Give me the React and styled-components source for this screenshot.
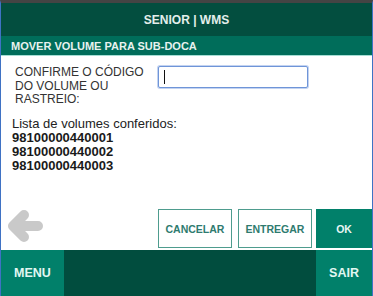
import styled, { createGlobalStyle } from "styled-components";

const Global = createGlobalStyle`
  html, body {
    margin: 0;
    padding: 0;
    background: #ffffff;
  }
  * {
    box-sizing: border-box;
  }
`;

const Frame = styled.div`
  width: 373px;
  height: 296px;
  display: flex;
  flex-direction: column;
  border-top: 3px solid #444444;
  border-left: 1px solid #3f72c4;
  border-right: 1px solid #3f72c4;
  font-family: "Liberation Sans", Arial, sans-serif;
  overflow: hidden;
`;

const Header = styled.div`
  height: 33px;
  display: flex;
  align-items: center;
  justify-content: center;
  background: #034e3f;
  color: #e4eeeb;
  font-size: 12px;
  font-weight: bold;
`;

const SubHeader = styled.div`
  height: 20px;
  display: flex;
  align-items: center;
  padding-left: 10px;
  background: #006d5a;
  color: #e8f2ef;
  font-size: 11px;
  font-weight: bold;
  border-bottom: 1px solid #a6ded5;
`;

const Content = styled.div`
  flex: 1;
  display: flex;
  flex-direction: column;
  background: #ffffff;
  padding: 10px 0 2px 0;
`;

const Row = styled.div`
  display: flex;
  align-items: flex-start;
  gap: 7px;
  padding-left: 14px;
`;

const Label = styled.label`
  width: 136px;
  font-size: 12px;
  line-height: 13.5px;
  color: #333333;
`;

const InputWrap = styled.div`
  position: relative;
  width: 150px;
  height: 22px;
  &::after {
    content: "";
    position: absolute;
    left: 6px;
    top: 4px;
    width: 1px;
    height: 14px;
    background: #111111;
  }
`;

const Input = styled.input`
  width: 100%;
  height: 100%;
  border: 1px solid #6f95d8;
  box-shadow: 0 0 0 1px #c3d3f1;
  border-radius: 2px;
  outline: none;
  padding: 0 6px;
  font-family: inherit;
  font-size: 12px;
  caret-color: transparent;
`;

const List = styled.div`
  margin-top: 10px;
  padding-left: 11px;
  font-size: 13px;
  line-height: 13.7px;
  color: #222222;
`;

const ListTitle = styled.div`
  margin-bottom: 1px;
`;

const Code = styled.div`
  font-weight: bold;
  color: #1a1a1a;
`;

const Actions = styled.div`
  margin-top: auto;
  display: flex;
  align-items: center;
`;

const Back = styled.svg`
  width: 36px;
  height: 36px;
  margin-left: 6px;
  margin-top: -6px;
  flex: none;
`;

const Buttons = styled.div`
  margin-left: auto;
  display: flex;
`;

const Button = styled.button`
  height: 39px;
  width: ${(p) => p.w}px;
  padding: 0;
  border: ${(p) => (p.primary ? "none" : "1.5px solid #4e9c8e")};
  background: ${(p) => (p.primary ? "#01806a" : "#ffffff")};
  color: ${(p) => (p.primary ? "#eaf6f3" : "#2f7b6f")};
  font-family: inherit;
  font-size: 10.5px;
  font-weight: bold;
  cursor: pointer;
`;

const Group = styled.div`
  display: flex;
  gap: 6px;
  margin-right: 4px;
`;

const Footer = styled.div`
  height: 46px;
  display: flex;
  background: #014d3e;
`;

const FooterButton = styled.div`
  width: ${(p) => p.w}px;
  display: flex;
  align-items: center;
  justify-content: center;
  background: #01806a;
  color: #e2f7f2;
  font-size: 12.5px;
  font-weight: bold;
  margin-left: ${(p) => (p.right ? "auto" : "0")};
`;

const codes = ["98100000440001", "98100000440002", "98100000440003"];

function App() {
  return (
    <>
      <Global />
      <Frame>
        <Header>SENIOR | WMS</Header>
        <SubHeader>MOVER VOLUME PARA SUB-DOCA</SubHeader>
        <Content>
          <Row>
            <Label>CONFIRME O CÓDIGO DO VOLUME OU RASTREIO:</Label>
            <InputWrap>
              <Input type="text" />
            </InputWrap>
          </Row>
          <List>
            <ListTitle>Lista de volumes conferidos:</ListTitle>
            {codes.map((c) => (
              <Code key={c}>{c}</Code>
            ))}
          </List>
          <Actions>
            <Back viewBox="0 0 36 36">
              <path
                d="M31 18 H7 M17 7 L6 18 L17 29"
                fill="none"
                stroke="#c9c9c9"
                strokeWidth="10"
                strokeLinecap="round"
                strokeLinejoin="round"
              />
            </Back>
            <Buttons>
              <Group>
                <Button w={74}>CANCELAR</Button>
                <Button w={74}>ENTREGAR</Button>
              </Group>
              <Button w={56} primary>
                OK
              </Button>
            </Buttons>
          </Actions>
        </Content>
        <Footer>
          <FooterButton w={63}>MENU</FooterButton>
          <FooterButton w={56} right>
            SAIR
          </FooterButton>
        </Footer>
      </Frame>
    </>
  );
}

export default App;
